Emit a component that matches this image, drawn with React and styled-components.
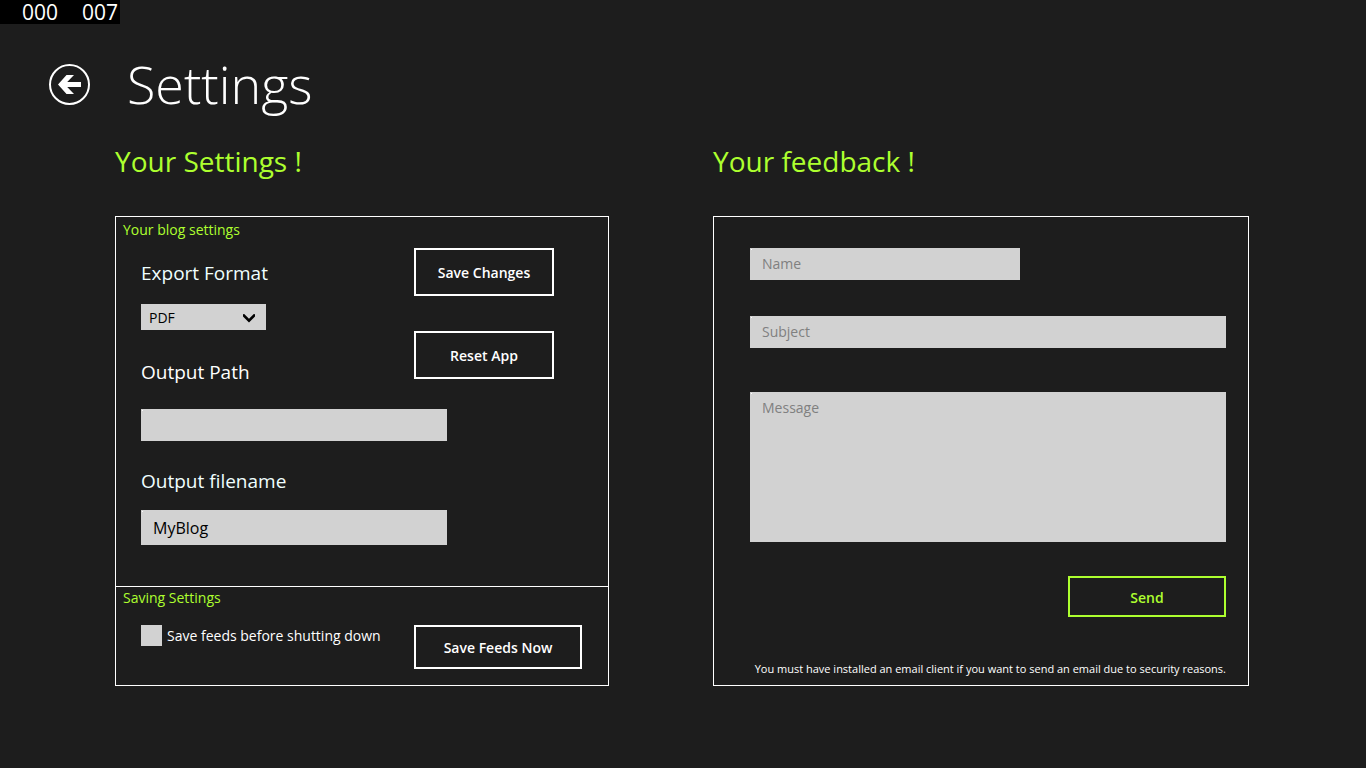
import React from "react";
import styled, { createGlobalStyle } from "styled-components";

const lime = "#adff2f";
const fieldFill = "#d2d2d2";

const GlobalStyle = createGlobalStyle`
  * { box-sizing: border-box; }
  body {
    margin: 0;
    background: #1d1d1d;
    color: #fff;
    font-family: "Open Sans", "Noto Sans", sans-serif;
    font-size: 14px;
    line-height: 20px;
  }
  button, input, select, textarea { font: inherit; }
`;

const Page = styled.div`
  position: relative;
  min-height: 100vh;
  padding: 48px 117px 48px 115px;
`;

const FrameCounter = styled.div`
  position: absolute;
  top: 0;
  left: 0;
  display: flex;
  gap: 24px;
  padding: 0 2px 0 22px;
  background: #000;
  font-size: 21px;
  line-height: 24px;
`;

const Header = styled.header`
  display: flex;
  align-items: center;
  gap: 36px;
  margin-left: -67px;
`;

const BackButton = styled.button`
  display: flex;
  padding: 0;
  border: 0;
  background: none;
  color: #fff;
`;

const Title = styled.h1`
  margin: 0;
  font-size: 52px;
  font-weight: 300;
  line-height: 72px;
`;

const Columns = styled.main`
  display: grid;
  grid-template-columns: minmax(0, 494fr) minmax(0, 536fr);
  gap: 104px;
  margin-top: 21px;
`;

const Column = styled.section`
  display: flex;
  flex-direction: column;
`;

const ColumnTitle = styled.h2`
  margin: 0 0 35px;
  color: ${lime};
  font-size: 28px;
  font-weight: 400;
  line-height: 40px;
`;

const Panel = styled.div`
  flex: 1;
  border: 1px solid #fff;
`;

const BlogSection = styled.section`
  padding: 3px 25px 41px;
  border-bottom: 1px solid #fff;
`;

const SavingSection = styled.section`
  padding: 1px 25px 16px;
`;

const SectionTitle = styled.h3`
  margin: 0 0 0 -18px;
  color: ${lime};
  font-size: 14px;
  font-weight: 400;
  line-height: 20px;
`;

const SplitRow = styled.div`
  display: grid;
  grid-template-columns: 273px auto;
  justify-content: start;
  align-items: start;
  margin-top: ${(p) => p.$space}px;
`;

const Stack = styled.div`
  display: flex;
  flex-direction: column;
  align-items: flex-start;
  padding-top: 11px;
`;

const ButtonStack = styled.div`
  display: grid;
  gap: 35px;
`;

const FieldLabel = styled.label`
  display: block;
  margin-top: ${(p) => p.$space || 0}px;
  color: ${(p) => (p.$plain ? "#fff" : "#f0ffff")};
  font-size: 19px;
  line-height: 28px;
`;

const SelectBox = styled.div`
  display: grid;
  align-items: center;
  width: 125px;
  margin-top: 17px;
  background: ${fieldFill};

  > * { grid-area: 1 / 1; }
  > svg { justify-self: end; margin-right: 10px; pointer-events: none; }
`;

const Select = styled.select`
  appearance: none;
  width: 100%;
  height: 26px;
  padding: 2px 8px 0;
  border: 0;
  border-radius: 0;
  background: none;
  color: #000;
`;

const TextField = styled.input`
  display: block;
  width: 100%;
  max-width: ${(p) => p.$width || "none"};
  height: ${(p) => p.$height || 32}px;
  margin-top: ${(p) => p.$space}px;
  padding: ${(p) => (p.$large ? "0 12px" : "0 12px 2px")};
  border: 0;
  border-radius: 0;
  background: linear-gradient(#fff, #fff) 1px 1px / 1px 1px no-repeat ${fieldFill};
  color: #000;
  font-size: ${(p) => (p.$large ? 16 : 14)}px;

  &::placeholder { color: #808080; opacity: 1; }
`;

const MessageField = styled(TextField)`
  padding: 6px 12px;
  resize: none;
`;

const Button = styled.button`
  width: ${(p) => p.$width}px;
  height: ${(p) => p.$height}px;
  padding: 2px 0 0;
  border: 2px solid currentColor;
  border-radius: 0;
  background: none;
  color: ${(p) => (p.$accent ? lime : "#fff")};
  font-size: 14px;
  font-weight: 600;
`;

const CheckLabel = styled.label`
  display: flex;
  align-items: center;
  gap: 5px;
  line-height: 21px;
  white-space: nowrap;
`;

const Checkbox = styled.input`
  appearance: none;
  width: 21px;
  height: 21px;
  margin: 0;
  background: ${fieldFill};

  &:checked { border: 5px solid ${fieldFill}; background: #000; }
`;

const FeedbackForm = styled.form`
  padding: 31px 22px 7px 36px;
`;

const Actions = styled.div`
  display: flex;
  justify-content: flex-end;
  margin-top: 34px;
`;

const Note = styled.p`
  margin: 42px 0 0 -36px;
  font-size: 11px;
  line-height: 19px;
  text-align: right;
`;

export default function App() {
  return (
    <>
      <GlobalStyle />
      <Page>
        <FrameCounter>
          <span>000</span>
          <span>007</span>
        </FrameCounter>
        <Header>
          <BackButton type="button" aria-label="Back">
            <svg width="43" height="42" viewBox="0 0 43 42" fill="none">
              <circle cx="21.5" cy="21.5" r="19.5" stroke="currentColor" strokeWidth="2" />
              <path d="M10 21.5 18.5 12H26L19.2 19H33V24H19.2L26 31H18.5Z" fill="currentColor" />
            </svg>
          </BackButton>
          <Title>Settings</Title>
        </Header>
        <Columns>
          <Column>
            <ColumnTitle>Your Settings !</ColumnTitle>
            <Panel>
              <BlogSection>
                <SectionTitle>Your blog settings</SectionTitle>
                <SplitRow $space={8}>
                  <Stack>
                    <FieldLabel htmlFor="format">Export Format</FieldLabel>
                    <SelectBox>
                      <Select id="format" defaultValue="PDF">
                        <option>PDF</option>
                      </Select>
                      <svg width="14" height="14" viewBox="0 0 14 14" fill="none">
                        <path d="M1 4.2 2.2 4 7 8.8 11.8 4 13 4.2V6.6L7 12.4 1 6.6Z" fill="#000" />
                      </svg>
                    </SelectBox>
                    <FieldLabel htmlFor="path" $plain $space={28}>Output Path</FieldLabel>
                  </Stack>
                  <ButtonStack>
                    <Button type="button" $width={140} $height={48}>Save Changes</Button>
                    <Button type="button" $width={140} $height={48}>Reset App</Button>
                  </ButtonStack>
                </SplitRow>
                <TextField id="path" type="text" $width="306px" $space={23} />
                <FieldLabel htmlFor="filename" $space={26}>Output filename</FieldLabel>
                <TextField id="filename" type="text" defaultValue="MyBlog" $large $width="306px" $height={35} $space={15} />
              </BlogSection>
              <SavingSection>
                <SectionTitle>Saving Settings</SectionTitle>
                <SplitRow $space={17}>
                  <CheckLabel>
                    <Checkbox type="checkbox" />
                    Save feeds before shutting down
                  </CheckLabel>
                  <Button type="button" $width={168} $height={44}>Save Feeds Now</Button>
                </SplitRow>
              </SavingSection>
            </Panel>
          </Column>
          <Column>
            <ColumnTitle>Your feedback !</ColumnTitle>
            <Panel>
              <FeedbackForm onSubmit={(e) => e.preventDefault()}>
                <TextField type="text" aria-label="Name" placeholder="Name" $width="270px" $space={0} />
                <TextField type="text" aria-label="Subject" placeholder="Subject" $space={36} />
                <MessageField as="textarea" aria-label="Message" placeholder="Message" $height={150} $space={44} />
                <Actions>
                  <Button type="submit" $accent $width={158} $height={41}>Send</Button>
                </Actions>
                <Note>You must have installed an email client if you want to send an email due to security reasons.</Note>
              </FeedbackForm>
            </Panel>
          </Column>
        </Columns>
      </Page>
    </>
  );
}
